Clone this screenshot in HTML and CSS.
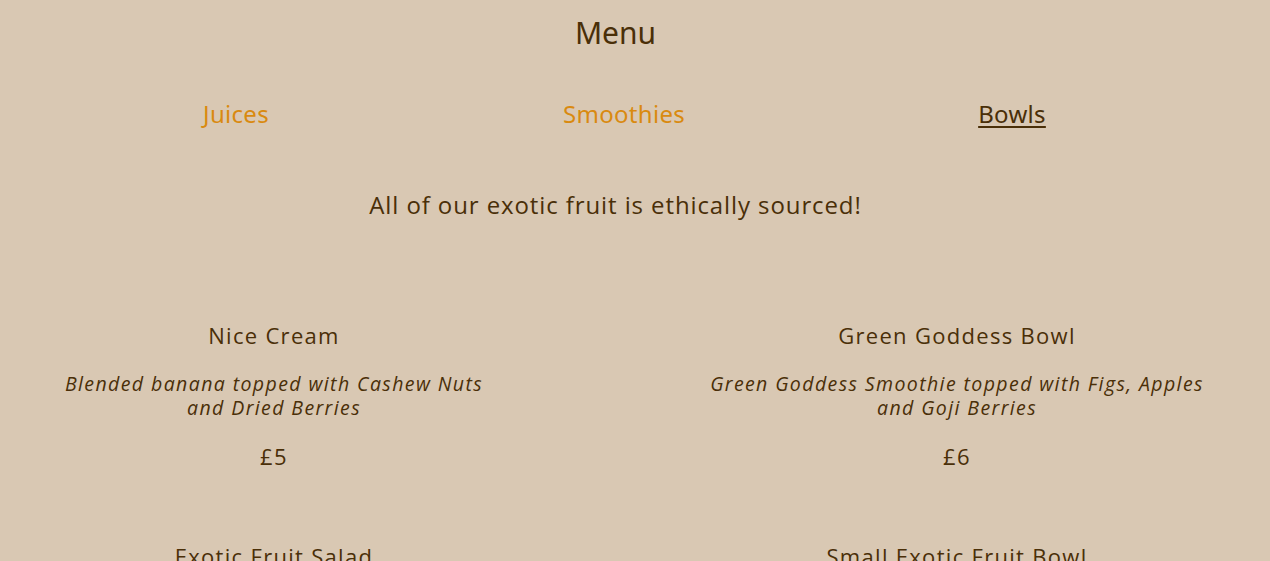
FILE: index.html
```html
<!DOCTYPE html>
<html lang="en">
<head>
<meta charset="utf-8">
<title>Menu</title>
<link rel="stylesheet" href="styles.css">
</head>
<body>
<main class="page">
  <h1 class="title">Menu</h1>
  <nav class="tabs">
    <a class="tab" href="#">Juices</a>
    <a class="tab" href="#">Smoothies</a>
    <a class="tab active" href="#">Bowls</a>
  </nav>
  <p class="tagline">All of our exotic fruit is ethically sourced!</p>
  <section class="items">
    <article class="item left">
      <h2 class="name">Nice Cream</h2>
      <p class="desc">Blended banana topped with Cashew Nuts and Dried Berries</p>
      <p class="price">£5</p>
    </article>
    <article class="item right">
      <h2 class="name">Green Goddess Bowl</h2>
      <p class="desc">Green Goddess Smoothie topped with Figs, Apples and Goji Berries</p>
      <p class="price">£6</p>
    </article>
    <article class="item left">
      <h2 class="name">Exotic Fruit Salad</h2>
      <p class="desc">Mango, Papaya, Pineapple and Passion Fruit</p>
      <p class="price">£5</p>
    </article>
    <article class="item right">
      <h2 class="name">Small Exotic Fruit Bowl</h2>
      <p class="desc">Mango, Papaya and Pineapple</p>
      <p class="price">£3</p>
    </article>
  </section>
</main>
</body>
</html>
```
FILE: styles.css
```css
html, body {
  margin: 0;
  padding: 0;
  background: #d9c8b3;
}
body {
  color: #4a2f08;
  font-family: "Open Sans", "DejaVu Sans", sans-serif;
  overflow: hidden;
}
.page {
  width: 1231px;
}
.title {
  margin: 0;
  padding-top: 13px;
  text-align: center;
  font-family: "Noto Sans", "Liberation Sans", sans-serif;
  font-weight: 400;
  font-size: 30px;
  line-height: 40px;
}
.tabs {
  display: grid;
  grid-template-columns: repeat(3, 388px);
  padding-left: 42px;
  margin-top: 46px;
}
.tab {
  text-align: center;
  font-family: "Noto Sans", "Liberation Sans", sans-serif;
  font-size: 24px;
  line-height: 30px;
  letter-spacing: 0.3px;
  color: #d98a10;
  text-decoration: none;
}
.tab.active {
  color: #4a2f08;
  text-decoration: underline;
  text-underline-offset: 3px;
  text-decoration-thickness: 2px;
}
.tagline {
  margin: 61px 0 0;
  text-align: center;
  font-size: 24px;
  line-height: 30px;
  font-weight: 500;
  letter-spacing: 0.9px;
}
.items {
  display: grid;
  grid-template-columns: 448px 510px;
  column-gap: 204px;
  padding-left: 50px;
  margin-top: 100px;
  row-gap: 70px;
}
.item {
  text-align: center;
}
.name {
  margin: 0;
  font-size: 22px;
  line-height: 30px;
  font-weight: 500;
  letter-spacing: 1.3px;
}
.desc {
  margin: 22px 0 0;
  font-style: italic;
  font-size: 19.5px;
  line-height: 24px;
  font-weight: 500;
  letter-spacing: 1.4px;
}
.price {
  margin: 21px 0 0;
  font-size: 22px;
  line-height: 30px;
  font-weight: 500;
  letter-spacing: 1.3px;
}
```
